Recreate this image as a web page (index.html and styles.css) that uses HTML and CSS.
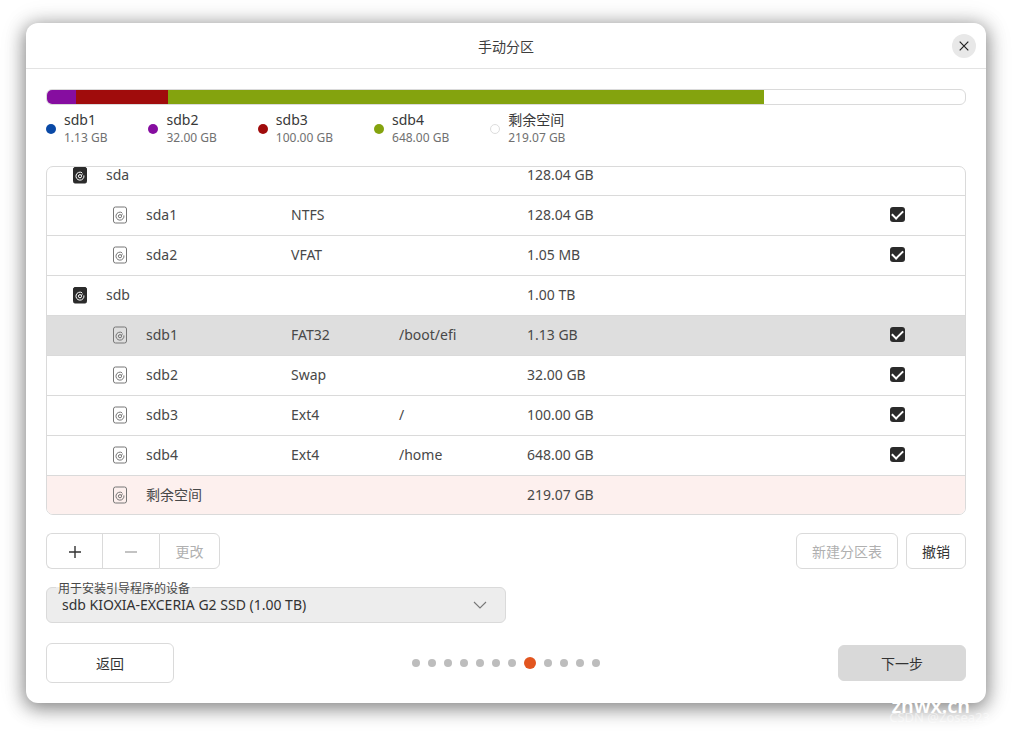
FILE: index.html
```html
<!DOCTYPE html>
<html lang="zh-CN">
<head>
<meta charset="utf-8">
<title>手动分区</title>
<link rel="stylesheet" href="styles.css">
</head>
<body>
<svg width="0" height="0" class="defs" aria-hidden="true">
  <symbol id="disk" viewBox="0 0 16 18">
    <rect x="1.5" y="1.5" width="13" height="15.5" rx="1.5" fill="#2b2b2b" stroke="#2b2b2b"/>
    <path d="M10 6.7A4 4 0 1 0 11.9 9.4" fill="none" stroke="#fff"/>
    <circle cx="8" cy="10.2" r="1.6" fill="none" stroke="#fff"/>
    <path d="M9.2 9.2L11 7.6" stroke="#fff" stroke-width=".8"/>
  </symbol>
  <symbol id="part" viewBox="0 0 16 18">
    <rect x="1.5" y="1" width="13" height="16" rx="2" fill="none" stroke="#777"/>
    <path d="M10 6.7A4 4 0 1 0 11.9 9.4" fill="none" stroke="#666" stroke-width=".9"/>
    <circle cx="8" cy="10.2" r="1.6" fill="none" stroke="#666" stroke-width=".9"/>
    <path d="M9.2 9.2L11 7.6" stroke="#666" stroke-width=".8"/>
  </symbol>
</svg>
<main class="window">
  <header class="titlebar">
    <h1 class="title">手动分区</h1>
    <button class="close" type="button" aria-label="关闭"><svg width="12" height="12" viewBox="0 0 12 12"><path d="M1.7 1.7l8.6 8.6M10.3 1.7l-8.6 8.6" stroke="#222" stroke-width="1.2"/></svg></button>
  </header>
  <div class="content">
    <div class="bar">
      <span class="seg purple" style="width:3.2%"></span>
      <span class="seg red" style="width:10%"></span>
      <span class="seg green" style="width:64.9%"></span>
    </div>
    <ul class="legend">
      <li class="entry"><span class="dot blue"></span><div><div class="name">sdb1</div><div class="amount">1.13 GB</div></div></li>
      <li class="entry"><span class="dot purple"></span><div><div class="name">sdb2</div><div class="amount">32.00 GB</div></div></li>
      <li class="entry"><span class="dot red"></span><div><div class="name">sdb3</div><div class="amount">100.00 GB</div></div></li>
      <li class="entry"><span class="dot green"></span><div><div class="name">sdb4</div><div class="amount">648.00 GB</div></div></li>
      <li class="entry"><span class="dot free"></span><div><div class="name">剩余空间</div><div class="amount">219.07 GB</div></div></li>
    </ul>
    <div class="list">
      <table class="parts">
        <colgroup><col class="c-name"><col class="c-type"><col class="c-mount"><col class="c-size"><col class="c-check"></colgroup>
        <tbody>
        <tr><td class="disk"><span class="cell"><svg class="icon"><use href="#disk"/></svg>sda</span></td><td></td><td></td><td>128.04 GB</td><td></td></tr>
        <tr><td class="part"><span class="cell"><svg class="icon"><use href="#part"/></svg>sda1</span></td><td>NTFS</td><td></td><td>128.04 GB</td><td><input class="check" type="checkbox" checked aria-label="sda1"></td></tr>
        <tr><td class="part"><span class="cell"><svg class="icon"><use href="#part"/></svg>sda2</span></td><td>VFAT</td><td></td><td>1.05 MB</td><td><input class="check" type="checkbox" checked aria-label="sda2"></td></tr>
        <tr><td class="disk"><span class="cell"><svg class="icon"><use href="#disk"/></svg>sdb</span></td><td></td><td></td><td>1.00 TB</td><td></td></tr>
        <tr class="selected"><td class="part"><span class="cell"><svg class="icon"><use href="#part"/></svg>sdb1</span></td><td>FAT32</td><td>/boot/efi</td><td>1.13 GB</td><td><input class="check" type="checkbox" checked aria-label="sdb1"></td></tr>
        <tr><td class="part"><span class="cell"><svg class="icon"><use href="#part"/></svg>sdb2</span></td><td>Swap</td><td></td><td>32.00 GB</td><td><input class="check" type="checkbox" checked aria-label="sdb2"></td></tr>
        <tr><td class="part"><span class="cell"><svg class="icon"><use href="#part"/></svg>sdb3</span></td><td>Ext4</td><td>/</td><td>100.00 GB</td><td><input class="check" type="checkbox" checked aria-label="sdb3"></td></tr>
        <tr><td class="part"><span class="cell"><svg class="icon"><use href="#part"/></svg>sdb4</span></td><td>Ext4</td><td>/home</td><td>648.00 GB</td><td><input class="check" type="checkbox" checked aria-label="sdb4"></td></tr>
        <tr class="unused"><td class="part"><span class="cell"><svg class="icon"><use href="#part"/></svg>剩余空间</span></td><td></td><td></td><td>219.07 GB</td><td></td></tr>
        </tbody>
      </table>
    </div>
    <div class="toolbar">
      <div class="group">
        <button class="btn" type="button" aria-label="添加"><svg width="12" height="12" viewBox="0 0 12 12"><path d="M6 0v12M0 6h12" stroke="#333" stroke-width="1.4"/></svg></button>
        <button class="btn" type="button" disabled aria-label="删除"><svg width="12" height="12" viewBox="0 0 12 12"><path d="M0 6h12" stroke="#aaa" stroke-width="1.4"/></svg></button>
        <button class="btn" type="button" disabled>更改</button>
      </div>
      <div class="actions">
        <button class="btn" type="button" disabled>新建分区表</button>
        <button class="btn" type="button">撤销</button>
      </div>
    </div>
    <div class="field">
      <label class="field-label" for="boot">用于安装引导程序的设备</label>
      <select class="select" id="boot"><option>sdb KIOXIA-EXCERIA G2 SSD (1.00 TB)</option></select>
      <svg class="chevron" width="14" height="8" viewBox="0 0 14 8"><path d="M1 1l6 6 6-6" fill="none" stroke="#777" stroke-width="1.1"/></svg>
    </div>
    <footer class="footer">
      <button class="btn back" type="button">返回</button>
      <div class="pages">
        <i class="page"></i><i class="page"></i><i class="page"></i><i class="page"></i><i class="page"></i><i class="page"></i><i class="page"></i><i class="page current"></i><i class="page"></i><i class="page"></i><i class="page"></i><i class="page"></i>
      </div>
      <button class="btn next" type="button">下一步</button>
    </footer>
  </div>
  <span class="mark author">CSDN @Zosea23</span>
  <span class="mark site">znwx.cn</span>
</main>
</body>
</html>
```
FILE: styles.css
```css
* { box-sizing: border-box; }

body {
  display: flex;
  height: 100vh;
  margin: 0;
  padding: 23px 26px 29px;
  background: #fff;
  color: #484848;
  font: 14px/20px "Noto Sans", "Noto Sans CJK SC", sans-serif;
  overflow: hidden;
}

button, select { font: inherit; color: inherit; }

.defs { position: absolute; }

.window {
  position: relative;
  display: flex;
  flex: 1;
  flex-direction: column;
  border-radius: 12px;
  background: #fff;
  box-shadow: 0 4px 18px 1px rgba(0, 0, 0, .42), 0 2px 24px 4px rgba(0, 0, 0, .12);
}

.titlebar {
  display: grid;
  grid-template-columns: 1fr auto 1fr;
  align-items: center;
  height: 46px;
  padding: 0 10px;
  border-bottom: 1px solid #e3e3e3;
}

.title {
  grid-column: 2;
  margin: 0;
  padding-top: 2px;
  font-size: 14px;
  font-weight: 400;
  color: #3d3d3d;
}

.close {
  display: grid;
  place-items: center;
  justify-self: end;
  width: 24px;
  height: 24px;
  padding: 0;
  border: 0;
  border-radius: 50%;
  background: #e8e8e8;
}

.content {
  display: flex;
  flex: 1;
  flex-direction: column;
  min-height: 0;
  padding: 20px;
}

.bar {
  display: flex;
  height: 16px;
  border: 1px solid #dadada;
  border-radius: 6px;
  overflow: hidden;
}

.blue { background: #0a49a6; }
.purple { background: #860da0; }
.red { background: #a00c0c; }
.green { background: #84a30e; }
.free { border: 1px solid #ddd; }

.legend {
  display: flex;
  gap: 41px;
  margin: 6px 0 19px;
  padding: 0;
  list-style: none;
}

.entry { display: flex; align-items: center; gap: 8px; }
.dot { width: 10px; height: 10px; border-radius: 50%; }
.name { height: 18px; line-height: 18px; color: #383838; }
.amount { height: 18px; font-size: 12px; line-height: 18px; color: #707070; }

/* The list is scrolled to its end. */
.list {
  display: flex;
  flex: 1;
  flex-direction: column;
  justify-content: flex-end;
  min-height: 0;
  border: 1px solid #dadada;
  border-radius: 7px;
  overflow: hidden;
}

.parts {
  flex: none;
  width: 100%;
  table-layout: fixed;
  border-collapse: separate;
  border-spacing: 0;
}

.c-name { width: 244px; }
.c-type { width: 108px; }
.c-mount { width: 128px; }
.c-check { width: 75px; }

.parts td {
  height: 40px;
  padding: 0 0 2px;
  border-bottom: 1px solid #dadada;
  white-space: nowrap;
}

.parts .disk { padding-left: 25px; }
.parts .part { padding-left: 65px; }
.selected { background: #dedede; }
.unused { background: #fdf0ee; }
.parts .unused td { height: 38px; padding-bottom: 0; border-bottom: 0; }
.cell { display: flex; align-items: center; gap: 18px; }
.icon { width: 16px; height: 18px; }

.check {
  display: grid;
  place-items: center;
  width: 15px;
  height: 15px;
  margin: 0;
  border-radius: 3px;
  appearance: none;
}

.check:checked { background: #2b2b2b; }

.check:checked::after {
  content: "";
  width: 9px;
  height: 5px;
  margin-bottom: 3px;
  border: solid #fff;
  border-width: 0 0 2px 2px;
  transform: rotate(-45deg);
}

.toolbar {
  display: flex;
  justify-content: space-between;
  margin: 18px 0;
}

.group, .actions { display: flex; }
.actions { gap: 8px; }

.btn {
  display: grid;
  place-items: center;
  height: 36px;
  padding: 1px 15px 0;
  border: 1px solid #dadada;
  border-radius: 6px;
  background: #fff;
  color: #333;
}

.btn:disabled { color: #b0b0b0; }
.group .btn { width: 57px; border-right-width: 0; border-radius: 0; }
.group .btn:first-child { width: 56px; border-radius: 6px 0 0 6px; }
.group .btn:last-child { width: 61px; border-right-width: 1px; border-radius: 0 6px 6px 0; }

.field {
  position: relative;
  width: 50%;
  margin-bottom: 20px;
}

.select {
  display: block;
  width: 100%;
  height: 36px;
  padding: 0 40px 0 15px;
  border: 1px solid #dadada;
  border-radius: 6px;
  background: #ededed;
  color: #333;
  appearance: none;
}

.field-label {
  position: absolute;
  top: -8px;
  left: 10px;
  padding: 1px 2px 0;
  font-size: 12px;
  line-height: 18px;
  background: linear-gradient(#fff 8px, #ededed 8px);
}

.chevron {
  position: absolute;
  top: 14px;
  right: 19px;
  pointer-events: none;
}

.footer {
  display: flex;
  align-items: center;
  justify-content: space-between;
}

.back, .next { width: 128px; }
.back { height: 40px; }
.next { border-color: #d9d9d9; background: #d9d9d9; }
.pages { display: flex; align-items: center; gap: 8px; }
.page { width: 8px; height: 8px; border-radius: 50%; background: #bdbdbd; }
.current { width: 12px; height: 12px; background: #e2551f; }

.mark { position: absolute; color: #fff; white-space: nowrap; pointer-events: none; }
.site { right: 16px; bottom: -17px; font-size: 20px; font-weight: 600; line-height: 28px; }
.author { right: -4px; bottom: -24px; font-size: 13px; opacity: .5; }
```
